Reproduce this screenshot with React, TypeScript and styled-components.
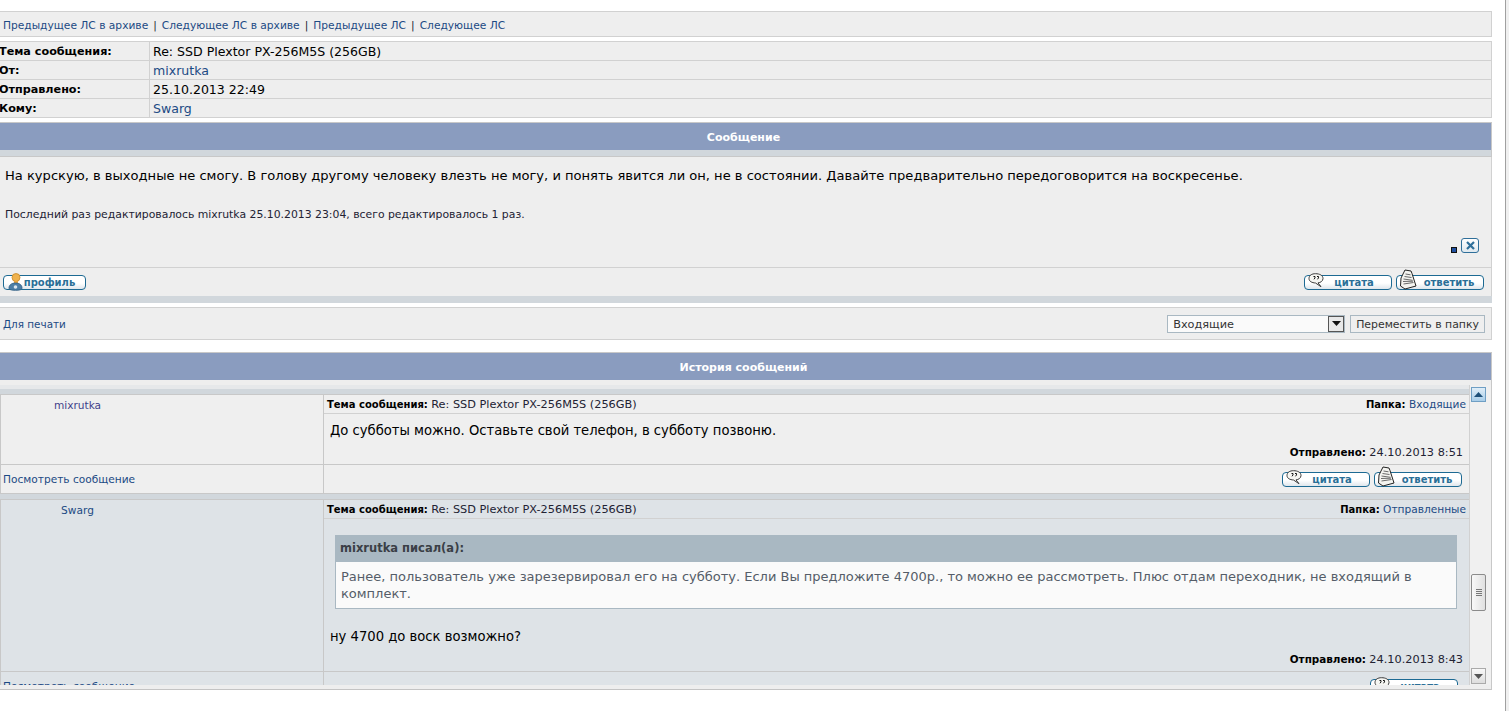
import React from 'react';
import styled, { createGlobalStyle } from 'styled-components';

const Quote: React.FC = () => (
  <IconSvg $top={-3} $left={3} width="17" height="15" viewBox="0 0 17 15">
    <path d="M7.500 .7c4 0 7.500 1.600 7.500 4.800 0 2.600-2.600 4.200-5 4.400l3 3.800-5.500-3.700C3.800 9.800 1 8.300 1 5.500 1 2.300 3.800.7 7.500.7z" fill="#f6f6f2" stroke="#3a3a3a" strokeWidth="1" />
    <path d="M5.500 3.500h1.500v1.400L6 6.300M9 3.500h1.500v1.400L9.500 6.300" fill="none" stroke="#111" strokeWidth="1" />
  </IconSvg>
);

const Reply: React.FC = () => (
  <IconSvg $top={-7} $left={3} width="17" height="21" viewBox="0 0 17 21">
    <path d="M5 1l6 1 1 2.500L16 17l-11 3-4.500-3L1 9z" fill="#f4f4f0" stroke="#222" strokeWidth="1" />
    <path d="M5.500 5l5 .8M4.500 7.500l7 1M3.500 10l9 1.300M3 12.500l10-.3M3.500 15l10-1.500" stroke="#6a6a6a" strokeWidth="1" />
  </IconSvg>
);

const Person: React.FC = () => (
  <IconSvg $top={-3} $left={4} width="15" height="18" viewBox="0 0 15 18">
    <circle cx="8" cy="4.500" r="4" fill="#efb24e" stroke="#c98a2a" strokeWidth="0.800" />
    <path d="M6 8h4v2.500H6z" fill="#e8a33e" />
    <path d="M1 15c0-3 2.500-5 6.500-5s6.500 2 6.500 5c0 1.500-2 2.300-6.500 2.300S1 16.500 1 15z" fill="#4d7ea6" stroke="#2b5a80" strokeWidth="0.800" />
    <circle cx="7.500" cy="14" r="1.800" fill="#dbe6ee" />
  </IconSvg>
);

const Header: React.FC<{ children: React.ReactNode }> = ({ children }) => (
  <HeadBar>{children}</HeadBar>
);

const QuoteReplyButtons: React.FC<{ quoteOnly?: boolean }> = ({ quoteOnly }) => (
  <ButtonGroup $trail={quoteOnly ? 4 : 0}>
    <PillButton $width={88} $pad={12}>
      <Quote />
      цитата
    </PillButton>
    {!quoteOnly && (
      <PillButton $width={88} $pad={18}>
        <Reply />
        ответить
      </PillButton>
    )}
  </ButtonGroup>
);

interface PostProps {
  alt?: boolean;
  author: string;
  folderLink: string;
  sent: string;
  bodyHeight: number;
  children: React.ReactNode;
}

const Post: React.FC<PostProps> = ({ alt, author, folderLink, sent, bodyHeight, children }) => (
  <>
    <PostStrip />
    <PostRow $alt={alt}>
      <AuthorCell>
        <AuthorName $alt={alt}>{author}</AuthorName>
      </AuthorCell>
      <PostMain $height={bodyHeight}>
        <PostTop>
          <span>
            <b>Тема сообщения:</b> <SubjectText>Re: SSD Plextor PX-256M5S (256GB)</SubjectText>
          </span>
          <span>
            <b>Папка:</b> <Link>{folderLink}</Link>
          </span>
        </PostTop>
        <PostBody>{children}</PostBody>
        <SentLine>
          <b>Отправлено:</b> <SubjectText>{sent}</SubjectText>
        </SentLine>
      </PostMain>
    </PostRow>
    <PostRow $alt={alt}>
      <ViewCell>
        <Link>Посмотреть сообщение</Link>
      </ViewCell>
      <ActionCell>
        <QuoteReplyButtons quoteOnly={alt} />
      </ActionCell>
    </PostRow>
  </>
);

export default function App() {
  return (
    <Page>
      <GlobalStyle />
      <Content>
        <NavBar>
          <Link>Предыдущее ЛС в архиве</Link>
          <NavSep>|</NavSep>
          <Link>Следующее ЛС в архиве</Link>
          <NavSep>|</NavSep>
          <Link>Предыдущее ЛС</Link>
          <NavSep>|</NavSep>
          <Link>Следующее ЛС</Link>
        </NavBar>
        <InfoTable>
          <InfoRow>
            <InfoLabel>Тема сообщения:</InfoLabel>
            <InfoValue>Re: SSD Plextor PX-256M5S (256GB)</InfoValue>
          </InfoRow>
          <InfoRow>
            <InfoLabel>От:</InfoLabel>
            <InfoValue>
              <Link>mixrutka</Link>
            </InfoValue>
          </InfoRow>
          <InfoRow>
            <InfoLabel>Отправлено:</InfoLabel>
            <InfoValue>25.10.2013 22:49</InfoValue>
          </InfoRow>
          <InfoRow>
            <InfoLabel>Кому:</InfoLabel>
            <InfoValue>
              <Link>Swarg</Link>
            </InfoValue>
          </InfoRow>
        </InfoTable>

        <Header>Сообщение</Header>
        <MessageStrip />
        <MessageBox>
          <MessageText>
            На курскую, в выходные не смогу. В голову другому человеку влезть не могу, и понять явится ли он, не в
            состоянии. Давайте предварительно передоговорится на воскресенье.
          </MessageText>
          <EditNote>Последний раз редактировалось mixrutka 25.10.2013 23:04, всего редактировалось 1 раз.</EditNote>
          <ReportRow>
            <ReportDot />
            <CloseButton>
              <svg width="11" height="9" viewBox="0 0 11 9">
                <path d="M2 1l7 7M9 1L2 8" stroke="#2f6f9a" strokeWidth="2.200" />
              </svg>
            </CloseButton>
          </ReportRow>
        </MessageBox>
        <ButtonsRow>
          <PillButton $width={83} $pad={10}>
            <Person />
            профиль
          </PillButton>
          <QuoteReplyButtons />
        </ButtonsRow>
        <BottomStrip />

        <ActionBar>
          <PrintLink>Для печати</PrintLink>
          <FolderForm>
            <FakeSelect>
              Входящие
              <SelectArrow>
                <svg width="9" height="5" viewBox="0 0 9 5">
                  <path d="M0 0h9L4.500 5z" fill="#111" />
                </svg>
              </SelectArrow>
            </FakeSelect>
            <MoveButton>Переместить в папку</MoveButton>
          </FolderForm>
        </ActionBar>

        <HistoryHead>
          <Header>История сообщений</Header>
        </HistoryHead>
        <HistoryFrame>
          <ClippedList>
            <TopStub />
            <Post author="mixrutka" folderLink="Входящие" sent="24.10.2013 8:51" bodyHeight={69}>
              <PostText>До субботы можно. Оставьте свой телефон, в субботу позвоню.</PostText>
            </Post>
            <Post alt author="Swarg" folderLink="Отправленные" sent="24.10.2013 8:43" bodyHeight={171}>
              <QuoteBox>
                <QuoteHead>mixrutka писал(а):</QuoteHead>
                <QuoteBody>
                  Ранее, пользователь уже зарезервировал его на субботу. Если Вы предложите 4700р., то можно ее
                  рассмотреть. Плюс отдам переходник, не входящий в комплект.
                </QuoteBody>
              </QuoteBox>
              <PostText>ну 4700 до воск возможно?</PostText>
            </Post>
          </ClippedList>
          <ScrollTrack>
            <ScrollUp>
              <svg width="9" height="5" viewBox="0 0 9 5">
                <path d="M4.500 0L9 5H0z" fill="#1d4f78" />
              </svg>
            </ScrollUp>
            <ScrollThumb>
              <Grip />
              <Grip />
              <Grip />
              <Grip />
            </ScrollThumb>
            <ScrollDown>
              <svg width="9" height="5" viewBox="0 0 9 5">
                <path d="M0 0h9L4.500 5z" fill="#555" />
              </svg>
            </ScrollDown>
          </ScrollTrack>
        </HistoryFrame>
      </Content>
      <WindowEdge />
    </Page>
  );
}

const GlobalStyle = createGlobalStyle`
    html, body {
      margin: 0;
      padding: 0;
      height: 100%;
      overflow: hidden;
      background: #fff;
    }
    body {
      font-family: "DejaVu Sans", Verdana, sans-serif;
      font-size: 10.600px;
      color: #000;
    }
    b {
      font-size: 10px;
    }
  `,
  Page = styled.div`
    display: flex;
    width: 1509px;
    height: 711px;
    overflow: hidden;
  `,
  Content = styled.div`
    width: 1492px;
    padding-top: 11px;
  `,
  WindowEdge = styled.div`
    width: 3px;
    height: 711px;
    margin-left: 13px;
    background: #f0f0f0;
    border-left: 1px solid #a0a0a0;
  `,
  Link = styled.a`
    color: #1c4a84;
  `,
  PrintLink = styled(Link)`
    font-size: 10.400px;
  `,
  NavBar = styled.div`
    height: 24px;
    line-height: 27px;
    padding-left: 3px;
    font-size: 10.670px;
    background: #eee;
    border: 1px solid #d1d1d1;
    border-left: 0;
    color: #223;
  `,
  NavSep = styled.span`
    margin: 0 5px;
  `,
  InfoTable = styled.div`
    margin-top: 4px;
    background: #eee;
    border-top: 1px solid #d1d1d1;
    border-right: 1px solid #d1d1d1;
    border-bottom: 1px solid #d1d1d1;
  `,
  InfoRow = styled.div`
    display: flex;
    height: 18px;
    & + & {
      border-top: 1px solid #d1d1d1;
    }
  `,
  InfoLabel = styled.div`
    width: 151px;
    box-sizing: border-box;
    border-right: 1px solid #d1d1d1;
    font-weight: bold;
    font-size: 11.200px;
    line-height: 20px;
    margin-left: -1px;
    flex-shrink: 0;
  `,
  InfoValue = styled.div`
    padding-left: 3px;
    font-size: 12.550px;
    line-height: 20px;
  `,
  HeadBar = styled.div`
    height: 27px;
    line-height: 30px;
    margin-top: 4px;
    padding-right: 4px;
    text-align: center;
    font-size: 11px;
    font-weight: bold;
    color: #fff;
    background: #8a9cbf;
    border-top: 1px solid #c8c8c8;
    border-right: 1px solid #c8c8c8;
  `,
  MessageStrip = styled.div`
    height: 6px;
    background: #d1d7dc;
    border-right: 1px solid #c8c8c8;
    border-bottom: 1px solid #c8c8c8;
  `,
  MessageBox = styled.div`
    box-sizing: border-box;
    height: 111px;
    padding: 0 5px;
    background: #eee;
    border-right: 1px solid #d1d1d1;
    border-bottom: 1px solid #d1d1d1;
    display: flex;
    flex-direction: column;
  `,
  MessageText = styled.div`
    margin-top: 10px;
    font-size: 13.070px;
    line-height: 17px;
  `,
  EditNote = styled.div`
    margin-top: 25px;
    font-size: 10.850px;
    line-height: 12px;
    color: #223;
  `,
  ReportRow = styled.div`
    margin-top: auto;
    padding: 0 7px 14px 0;
    display: flex;
    justify-content: flex-end;
    align-items: flex-end;
    gap: 4px;
  `,
  ReportDot = styled.div`
    width: 4px;
    height: 4px;
    background: #1f4fa0;
    border: 1px solid #111;
  `,
  CloseButton = styled.div`
    width: 16px;
    height: 13px;
    display: flex;
    align-items: center;
    justify-content: center;
    background: linear-gradient(#fff, #dfe8ee);
    border: 1px solid #2f6f9a;
    border-radius: 3px;
  `,
  ButtonsRow = styled.div`
    height: 28px;
    padding: 0 7px 0 3px;
    display: flex;
    justify-content: space-between;
    align-items: center;
    background: #eee;
    border-right: 1px solid #d1d1d1;
  `,
  ButtonGroup = styled.div<{ $trail: number }>`
    display: flex;
    gap: 4px;
    padding-right: ${(p) => p.$trail}px;
  `,
  PillButton = styled.div<{ $width: number; $pad: number }>`
    position: relative;
    box-sizing: border-box;
    width: ${(p) => p.$width}px;
    height: 15px;
    padding-left: ${(p) => p.$pad}px;
    text-align: center;
    font-size: 10px;
    font-weight: bold;
    line-height: 13px;
    color: #2a6f97;
    background: linear-gradient(#fff 55%, #dfe6ec);
    border: 1px solid #1d6a93;
    border-radius: 4px;
  `,
  IconSvg = styled.svg<{ $top: number; $left: number }>`
    position: absolute;
    left: ${(p) => p.$left}px;
    top: ${(p) => p.$top}px;
  `,
  BottomStrip = styled.div`
    height: 7px;
    background: #d1d7dc;
  `,
  ActionBar = styled.div`
    margin-top: 4px;
    height: 31px;
    padding: 0 6px 0 3px;
    display: flex;
    justify-content: space-between;
    align-items: center;
    background: #eee;
    border: 1px solid #d1d1d1;
    border-left: 0;
  `,
  FolderForm = styled.div`
    display: flex;
    gap: 5px;
  `,
  FakeSelect = styled.div`
    position: relative;
    box-sizing: border-box;
    width: 178px;
    height: 18px;
    padding-left: 5px;
    line-height: 18px;
    font-size: 11.300px;
    color: #333;
    background: #fafafa;
    border: 1px solid #a9b8c2;
  `,
  SelectArrow = styled.div`
    position: absolute;
    right: 0;
    top: 0;
    width: 16px;
    height: 16px;
    display: flex;
    align-items: center;
    justify-content: center;
    background: #e8e8e8;
    border: 1px solid #555;
    box-sizing: border-box;
  `,
  MoveButton = styled.div`
    box-sizing: border-box;
    height: 18px;
    padding: 0 5px;
    line-height: 17px;
    font-size: 10.900px;
    color: #333;
    background: #efefef;
    border: 1px solid #a9b8c2;
  `,
  HistoryHead = styled.div`
    margin-top: 12px;
  `,
  HistoryFrame = styled.div`
    display: flex;
    padding-top: 5px;
    padding-bottom: 4px;
    background: #eee;
    border-right: 1px solid #c8c8c8;
    border-bottom: 1px solid #c4c4c4;
  `,
  ClippedList = styled.div`
    box-sizing: border-box;
    width: 1470px;
    height: 300px;
    overflow: hidden;
    flex-shrink: 0;
    border-right: 1px solid #d1d1d1;
  `,
  TopStub = styled.div`
    height: 4px;
    background: #e6e8ea;
  `,
  PostStrip = styled.div`
    height: 5px;
    background: #d1d7dc;
    border-bottom: 1px solid #c8c8c8;
  `,
  PostRow = styled.div<{ $alt?: boolean }>`
    display: flex;
    background: ${(p) => (p.$alt ? '#dee3e7' : '#efefef')};
    border-left: 1px solid #c8c8c8;
    border-bottom: 1px solid #c8c8c8;
  `,
  AuthorCell = styled.div`
    width: 323px;
    box-sizing: border-box;
    border-right: 1px solid #c8c8c8;
    flex-shrink: 0;
    text-align: center;
    padding: 4px 169px 0 0;
  `,
  AuthorName = styled(Link)<{ $alt?: boolean }>`
    color: ${(p) => (p.$alt ? '#1c4a84' : '#3f3f8a')};
  `,
  PostMain = styled.div<{ $height: number }>`
    flex: 1;
    min-width: 0;
    height: ${(p) => p.$height}px;
    position: relative;
    display: flex;
    flex-direction: column;
  `,
  PostTop = styled.div`
    height: 18px;
    line-height: 19px;
    padding: 0 3px 0 3px;
    display: flex;
    justify-content: space-between;
    border-bottom: 1px solid #d1d1d1;
    color: #223;
    & b {
      color: #000;
    }
  `,
  SubjectText = styled.span`
    font-size: 11.300px;
  `,
  PostBody = styled.div`
    flex: 1;
    padding: 0 6px;
  `,
  PostText = styled.div`
    font-size: 13.170px;
    line-height: 17px;
    margin-top: 8px;
  `,
  SentLine = styled.div`
    text-align: right;
    padding: 0 6px 5px 0;
    line-height: 13px;
    color: #223;
    & b {
      font-size: 10.400px;
      color: #000;
    }
  `,
  ViewCell = styled(AuthorCell)`
    height: 28px;
    padding: 0 0 0 2px;
    line-height: 29px;
    text-align: left;
  `,
  ActionCell = styled.div`
    flex: 1;
    height: 28px;
    padding: 7px 7px 0 0;
    box-sizing: border-box;
    display: flex;
    justify-content: flex-end;
  `,
  QuoteBox = styled.div`
    margin: 16px 6px 19px 5px;
    border: 1px solid #a9b8c2;
    border-top: 0;
    background: #fafafa;
  `,
  QuoteHead = styled.div`
    height: 27px;
    line-height: 27px;
    padding-left: 5px;
    margin: 0 -1px;
    font-size: 11.500px;
    font-weight: bold;
    color: #3a3f46;
    background: #a9b8c2;
  `,
  QuoteBody = styled.div`
    padding: 6px 5px 6px;
    font-size: 13px;
    line-height: 17px;
    color: #555d68;
  `,
  ScrollTrack = styled.div`
    position: relative;
    width: 21px;
    height: 300px;
    background: #f0f0f0;
    box-sizing: border-box;
  `,
  ScrollUp = styled.div`
    position: absolute;
    top: 2px;
    left: 1px;
    width: 13px;
    height: 13px;
    display: flex;
    align-items: center;
    justify-content: center;
    background: linear-gradient(#e0eef8, #a8cde9);
    border: 1px solid #6f9fc4;
  `,
  ScrollThumb = styled.div`
    position: absolute;
    top: 189px;
    left: 1px;
    width: 15px;
    height: 37px;
    padding: 14px 1px;
    box-sizing: border-box;
    display: flex;
    flex-direction: column;
    gap: 1px;
    align-items: center;
    background: linear-gradient(90deg, #f8f8f8, #e0e0e0);
    border: 1px solid #8b8b8b;
    border-radius: 2px;
  `,
  Grip = styled.div`
    width: 6px;
    height: 1px;
    background: #777;
  `,
  ScrollDown = styled.div`
    position: absolute;
    bottom: 1px;
    left: 1px;
    width: 13px;
    height: 14px;
    display: flex;
    align-items: center;
    justify-content: center;
    background: linear-gradient(#f8f8f8, #ddd);
    border: 1px solid #aaa;
  `;
